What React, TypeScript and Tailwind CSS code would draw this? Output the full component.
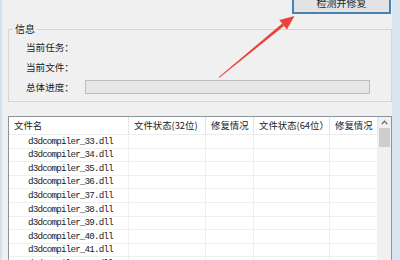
import React from "react";

const rows = ["33", "34", "35", "36", "37", "38", "39", "40", "41", "42"];

const cols = [
  { title: "文件名", w: "w-[120px]" },
  { title: "文件状态(32位)", w: "w-[77px]" },
  { title: "修复情况", w: "w-[48px]" },
  { title: "文件状态(64位）", w: "w-[76px]" },
  { title: "修复情况", w: "w-[48px]" },
];

function Arrow() {
  // red annotation arrow pointing at the button
  return (
    <svg
      className="absolute left-0 top-0 pointer-events-none"
      width="400"
      height="260"
      viewBox="0 0 400 260"
    >
      <polygon
        points="218.6,77.3 219.4,77.7 284.0,25.9 282.2,23.6"
        fill="#e8433c"
      />
      <polygon points="294.5,16 279.3,20.1 286.9,29.5" fill="#e8433c" />
    </svg>
  );
}

export default function App() {
  return (
    <div
      className="relative w-[400px] h-[260px] overflow-hidden flex bg-[#f0f0f0] text-[#222]"
      style={{ fontFamily: '"Noto Sans CJK SC", "Noto Sans", sans-serif' }}
    >
      {/* window edge */}
      <div className="w-[2px] shrink-0 bg-[#d2e2ef]" />

      <div className="w-[390px] shrink-0 flex flex-col pl-[6px]">
        {/* ── top button ── */}
        <div className="flex justify-end pr-[1px]">
          <button className="w-[99px] h-[23px] -mt-[9px] border-2 border-[#4682b4] bg-[#e3e3e3] text-[10px] leading-none text-[#222]">
            检测并修复
          </button>
        </div>

        {/* ── 信息 group ── */}
        <fieldset className="mt-[9px] border border-[#d5d5d5] pt-[2px] pb-[4px]">
          <legend className="ml-[4px] px-[2px] text-[10px] leading-[12px]">信息</legend>
          <div className="pl-[17px]">
            <div className="h-[20px] flex items-center text-[9.6px]">当前任务：</div>
            <div className="h-[20px] flex items-center text-[9.6px]">当前文件：</div>
            <div className="h-[20px] flex items-center">
              <span className="w-[59px] shrink-0 text-[9.6px]">总体进度：</span>
              <div className="w-[285px] h-[14px] border border-[#bcbcbc] bg-[#e6e6e6]" />
            </div>
          </div>
        </fieldset>

        {/* ── file list ── */}
        <div className="mt-[14px] flex border border-[#8e949b] bg-white h-[200px]">
          <div className="w-[369px] flex flex-col">
            <div className="flex h-[18px] border-b border-[#ececec]">
              {cols.map((c, i) => (
                <div
                  key={i}
                  className={`${c.w} shrink-0 border-r border-[#e5e5e5] pl-[5px] flex items-center text-[9.4px] whitespace-nowrap`}
                >
                  {c.title}
                </div>
              ))}
            </div>
            {rows.map((n) => (
              <div key={n} className="flex h-[13.6px] border-b border-[#efefef]">
                {cols.map((c, i) => (
                  <div
                    key={i}
                    className={`${c.w} shrink-0 border-r border-[#efefef] flex items-center`}
                  >
                    {i === 0 && (
                      <span
                        className="pl-[19px] text-[9.2px] tracking-[-0.8px] leading-none text-[#1a1a1a] whitespace-nowrap"
                        style={{ fontFamily: '"Liberation Mono", monospace' }}
                      >
                        d3dcompiler_{n}.dll
                      </span>
                    )}
                  </div>
                ))}
              </div>
            ))}
          </div>

          {/* scrollbar */}
          <div className="w-[13px] shrink-0 bg-[#f0f0f0] flex flex-col items-center">
            <div className="h-[11px] flex items-center justify-center">
              <svg width="7" height="5" viewBox="0 0 7 5">
                <path d="M0.8 4.2 L3.5 1.2 L6.2 4.2" fill="none" stroke="#606060" strokeWidth="1.2" />
              </svg>
            </div>
            <div className="w-[11px] h-[19px] bg-[#cdcdcd]" />
          </div>
        </div>
      </div>

      {/* window edge */}
      <div className="flex-1 bg-[#d8e6f2]" />

      <Arrow />
    </div>
  );
}
